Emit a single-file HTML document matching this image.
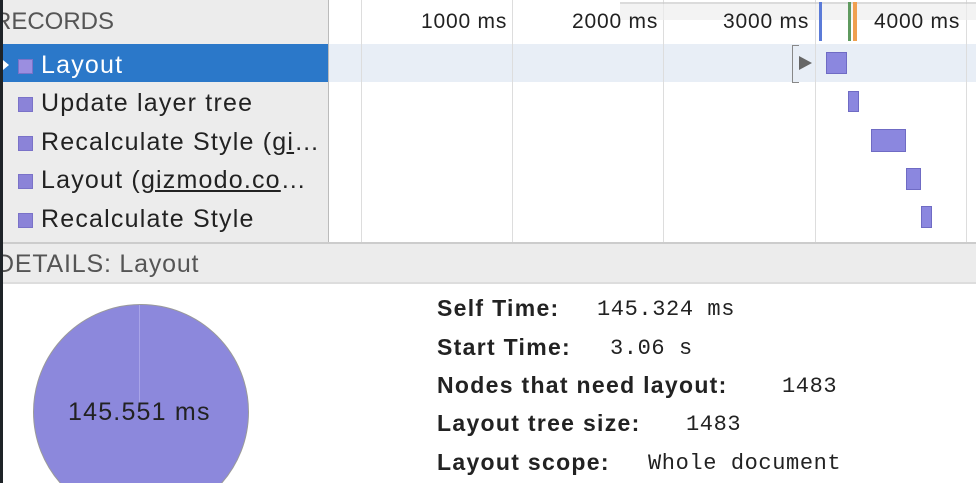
<!DOCTYPE html><html style="overflow:hidden;height:483px"><head><style>
body{margin:0;width:976px;height:483px;overflow:hidden;background:#fff;font-family:"Liberation Sans","DejaVu Sans",sans-serif;position:relative}
#w{position:absolute;left:0;top:0;width:976px;height:483px;overflow:hidden}
.a{position:absolute;white-space:nowrap}
.row{position:absolute;left:0;width:328px;height:38px;font-size:25px;color:#222;line-height:38px;letter-spacing:1.2px}
.sq{position:absolute;left:18px;top:13px;width:13px;height:13px;background:#8b83d8;border:1px solid #7a72c8}
.row span{position:absolute;left:41px;white-space:nowrap}
.g{position:absolute;top:0;width:1px;height:242px;background:#ddd}
.b{position:absolute;background:#8b87df;border:1px solid #6f6bc4}
.t{position:absolute;font-size:21px;color:#222;top:10px;letter-spacing:.8px}
.d{position:absolute;left:437px;font-size:23px;font-weight:bold;color:#222;letter-spacing:1.3px;white-space:nowrap}
.v{position:absolute;font-family:"Liberation Mono",monospace;font-size:22px;color:#222;letter-spacing:.6px;white-space:nowrap}
</style></head><body><div id="w">
<div class="a" style="left:0;top:0;width:328px;height:242px;background:#ececec"></div>
<div class="a" style="left:328px;top:0;width:1px;height:242px;background:#bbb"></div>
<div class="a" style="left:-6px;top:8px;font-size:24px;color:#555">RECORDS</div>
<div class="a" style="left:0;top:44px;width:328px;height:38px;background:#2b78c9"></div>
<div class="a" style="left:329px;top:44px;width:647px;height:38px;background:#e8eef6"></div>
<div class="g" style="left:361px"></div><div class="g" style="left:512px"></div><div class="g" style="left:663px"></div><div class="g" style="left:815px"></div><div class="g" style="left:966px"></div>
<div class="a" style="left:620px;top:2px;width:356px;height:16px;border-top:2px solid #ccc;background:#eee;opacity:.7"></div>
<div class="t" style="left:421px">1000 ms</div><div class="t" style="left:572px">2000 ms</div><div class="t" style="left:723px">3000 ms</div><div class="t" style="left:874px">4000 ms</div>
<div class="a" style="left:819px;top:2px;width:3px;height:39px;background:#5b7bd8"></div>
<div class="a" style="left:848px;top:2px;width:3px;height:39px;background:#5f9a5f"></div>
<div class="a" style="left:853px;top:2px;width:4px;height:39px;background:#f0a050"></div>
<div class="row" style="top:46px;color:#fff"><div class="a" style="left:3px;top:14px;width:0;height:0;border-left:6px solid #fff;border-top:5px solid transparent;border-bottom:5px solid transparent"></div><div class="sq" style="background:#9b8ee0"></div><span>Layout</span></div>
<div class="row" style="top:84px"><div class="sq"></div><span>Update layer tree</span></div>
<div class="row" style="top:123px"><div class="sq"></div><span>Recalculate Style (<u>gi</u>…</span></div>
<div class="row" style="top:161px"><div class="sq"></div><span>Layout (<u>gizmodo.co</u>…</span></div>
<div class="row" style="top:200px"><div class="sq"></div><span>Recalculate Style</span></div>
<div class="a" style="left:792px;top:45px;width:6px;height:36px;border:1px solid #888;border-right:none"></div>
<div class="a" style="left:799px;top:56px;border-left:13px solid #666;border-top:7px solid transparent;border-bottom:7px solid transparent"></div>
<div class="b" style="left:826px;top:52px;width:19px;height:20px"></div>
<div class="b" style="left:848px;top:91px;width:9px;height:19px"></div>
<div class="b" style="left:871px;top:129px;width:33px;height:21px"></div>
<div class="b" style="left:906px;top:168px;width:13px;height:20px"></div>
<div class="b" style="left:921px;top:206px;width:9px;height:20px"></div>
<div class="a" style="left:0;top:242px;width:976px;height:42px;background:#ececec;border-top:2px solid #ccc;border-bottom:2px solid #ddd;box-sizing:border-box"></div>
<div class="a" style="left:-4px;top:250px;font-size:25px;color:#555;letter-spacing:.8px">DETAILS: Layout</div>
<div class="a" style="left:0;top:0;width:3px;height:483px;background:#1e2328"></div>
<div class="a" style="left:33px;top:304px;width:216px;height:216px;border-radius:50%;background:#8c88dc;border:1px solid #9a9a9a;box-sizing:border-box"></div>
<div class="a" style="left:139px;top:305px;width:1px;height:108px;background:#a8a4e8"></div>
<div class="a" style="left:68px;top:398px;font-size:25px;color:#222;letter-spacing:1.2px">145.551 ms</div>
<div class="d" style="top:295px">Self Time:</div><div class="v" style="left:597px;top:297px">145.324 ms</div>
<div class="d" style="top:334px">Start Time:</div><div class="v" style="left:610px;top:336px">3.06 s</div>
<div class="d" style="top:372px">Nodes that need layout:</div><div class="v" style="left:782px;top:374px">1483</div>
<div class="d" style="top:410px">Layout tree size:</div><div class="v" style="left:686px;top:412px">1483</div>
<div class="d" style="top:449px">Layout scope:</div><div class="v" style="left:648px;top:451px">Whole document</div>
</div></body></html>
